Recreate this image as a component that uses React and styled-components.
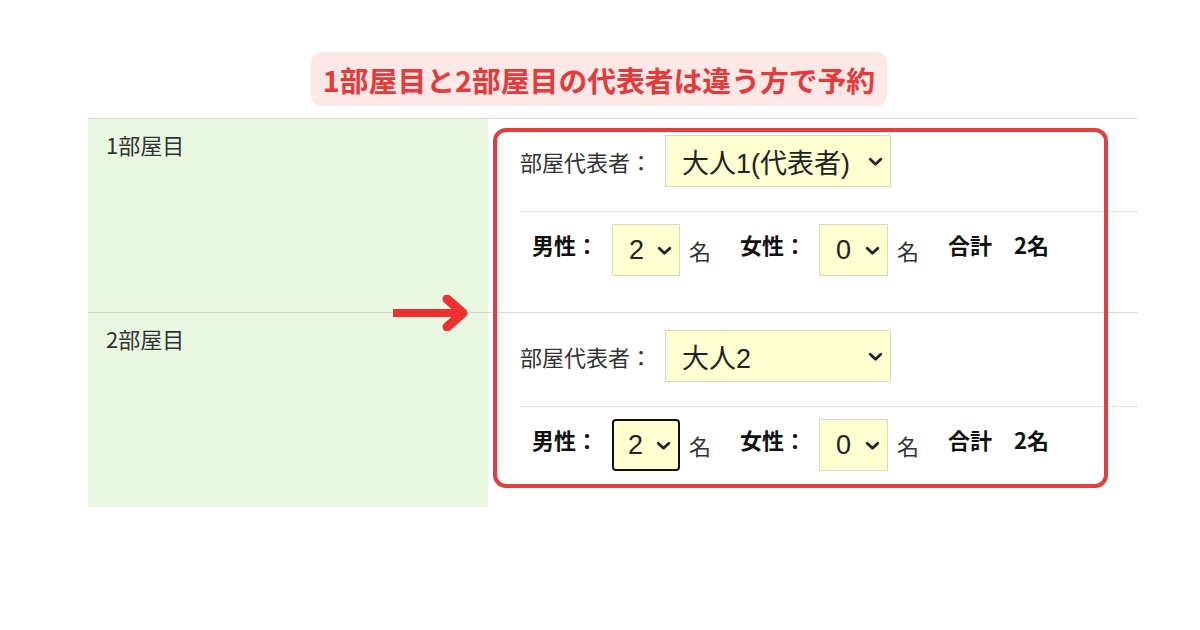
import React from "react";
import styled, { createGlobalStyle } from "styled-components";

const Global = createGlobalStyle`
  html, body { margin: 0; padding: 0; background: #fff; }
  body { width: 1200px; height: 630px; overflow: hidden;
    font-family: "Noto Sans CJK JP", "Noto Sans", sans-serif; color: #333; }
`;

const Page = styled.div`
  width: 1200px;
  height: 630px;
  display: flex;
  flex-direction: column;
  align-items: flex-start;
  padding-top: 52px;
  box-sizing: border-box;
`;

const Badge = styled.div`
  align-self: center;
  margin-left: -2px;
  height: 54px;
  padding: 0 12px;
  display: flex;
  align-items: center;
  background: #fde8e8;
  border-radius: 11px;
  color: #e63a3a;
  font-weight: 700;
  font-size: 28.8px;
  white-space: nowrap;
`;

const Table = styled.div`
  position: relative;
  margin: 12px 0 0 88px;
  width: 1049px;
  border-top: 1px solid #d6d6d6;
`;

const Row = styled.div`
  display: grid;
  grid-template-columns: 400px 1fr;
  border-top: ${(p) => (p.$first ? "none" : "1px solid #d6d6d6")};
`;

const Head = styled.div`
  background: #eaf7e1;
  padding: 9px 0 0 18px;
  font-size: 22px;
  line-height: 33px;
  color: #333;
`;

const Cell = styled.div`
  padding: ${(p) => (p.$first ? "16px" : "17px")} 0 36px 32px;
  display: flex;
  flex-direction: column;
`;

const Line = styled.div`
  display: flex;
  align-items: center;
  height: 52px;
  padding-left: ${(p) => p.$indent || 0}px;
`;

const Dotted = styled.div`
  margin: 24px 0 12px;
  border-top: 1px dotted #c8c8c8;
`;

const Label = styled.span`
  font-size: 22px;
  white-space: nowrap;
  margin-right: ${(p) => p.$mr || 0}px;
  font-weight: ${(p) => (p.$bold ? 700 : 400)};
  color: ${(p) => (p.$bold ? "#111" : "#333")};
  margin-bottom: ${(p) => (p.$bold ? 12 : 0)}px;
`;

const Select = styled.div`
  box-sizing: border-box;
  width: ${(p) => p.$w}px;
  height: 52px;
  margin-right: ${(p) => p.$mr || 0}px;
  background: #ffffd2;
  border: ${(p) => (p.$focus ? "2px solid #111" : "1px solid #d9d9c0")};
  border-radius: ${(p) => (p.$focus ? 4 : 0)}px;
  display: flex;
  align-items: center;
  justify-content: space-between;
  padding: 0 7px 0 ${(p) => (p.$focus ? 14 : 16)}px;
  font-family: "Liberation Sans", "Noto Sans CJK JP", sans-serif;
  font-size: 27px;
  color: #222;
  white-space: nowrap;
`;

const SelectText = styled.span`
  font-family: "Noto Sans CJK JP", sans-serif;
  & b { font-family: "Liberation Sans", sans-serif; font-weight: 400; }
`;

const Chevron = () => (
  <svg width="15" height="10" viewBox="0 0 15 10" style={{ flex: "none", marginTop: 2 }}>
    <path d="M2.2 2.2 L7.5 7.3 L12.8 2.2" fill="none" stroke="#222" strokeWidth="2.8" strokeLinecap="round" strokeLinejoin="round" />
  </svg>
);

const Highlight = styled.div`
  position: absolute;
  left: 405px;
  top: 9px;
  width: 615px;
  height: 360px;
  box-sizing: border-box;
  border: 4px solid #e53c3c;
  border-radius: 13px;
  pointer-events: none;
`;

const Arrow = styled.svg`
  position: absolute;
  left: 303px;
  top: 176px;
`;

function Room({ name, rep, first, focus }) {
  return (
    <Row $first={first}>
      <Head>{name}</Head>
      <Cell $first={first}>
        <Line>
          <Label $mr={13}>部屋代表者：</Label>
          <Select $w={226}>
            <SelectText>{rep}</SelectText>
            <Chevron />
          </Select>
        </Line>
        <Dotted />
        <Line $indent={12}>
          <Label $bold $mr={14}>男性：</Label>
          <Select $w={68} $mr={9} $focus={focus}>
            <span>2</span>
            <Chevron />
          </Select>
          <Label $mr={29}>名</Label>
          <Label $bold $mr={13}>女性：</Label>
          <Select $w={69} $mr={9}>
            <span>0</span>
            <Chevron />
          </Select>
          <Label $mr={29}>名</Label>
          <Label $bold>合計　2名</Label>
        </Line>
      </Cell>
    </Row>
  );
}

export default function App() {
  return (
    <>
      <Global />
      <Page>
        <Badge>1部屋目と2部屋目の代表者は違う方で予約</Badge>
        <Table>
          <Room
            first
            name="1部屋目"
            rep={<>大人<b>1(</b>代表者<b>)</b></>}
          />
          <Room name="2部屋目" rep={<>大人<b>2</b></>} focus />
          <Highlight />
          <Arrow width="80" height="36" viewBox="0 0 80 36">
            <path d="M2 18 H70" stroke="#f03030" strokeWidth="8" fill="none" />
            <path d="M56 4 L72 18 L56 32" stroke="#f03030" strokeWidth="9" fill="none" strokeLinecap="round" strokeLinejoin="round" />
          </Arrow>
        </Table>
      </Page>
    </>
  );
}
